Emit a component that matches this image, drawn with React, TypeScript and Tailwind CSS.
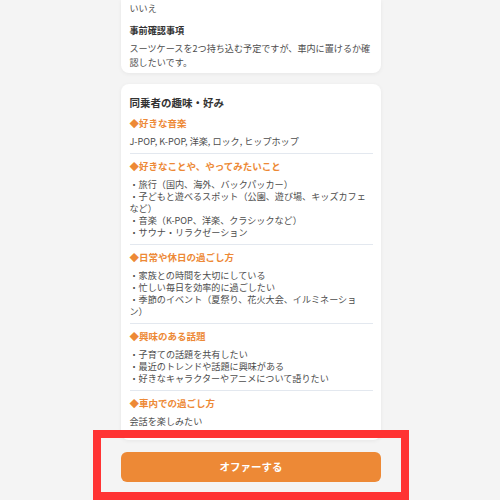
const sections = [
  { title: "◆好きな音楽", items: ["J-POP, K-POP, 洋楽, ロック, ヒップホップ"] },
  {
    title: "◆好きなことや、やってみたいこと",
    items: [
      "・旅行（国内、海外、バックパッカー）",
      "・子どもと遊べるスポット（公園、遊び場、キッズカフェなど）",
      "・音楽（K-POP、洋楽、クラシックなど）",
      "・サウナ・リラクゼーション",
    ],
  },
  {
    title: "◆日常や休日の過ごし方",
    items: [
      "・家族との時間を大切にしている",
      "・忙しい毎日を効率的に過ごしたい",
      "・季節のイベント（夏祭り、花火大会、イルミネーション）",
    ],
  },
  {
    title: "◆興味のある話題",
    items: [
      "・子育ての話題を共有したい",
      "・最近のトレンドや話題に興味がある",
      "・好きなキャラクターやアニメについて語りたい",
    ],
  },
  { title: "◆車内での過ごし方", items: ["会話を楽しみたい"] },
];

export default function App() {
  return (
    <div className='relative h-[500px] w-full overflow-hidden bg-[#f4f4f4] font-["Noto_Sans_CJK_JP","Noto_Sans",sans-serif] [text-spacing-trim:space-all]'>
      <div className="ml-[121px] flex w-[260px] flex-col">
        {/* 上のカード（スクロールで上部が切れている） */}
        <div className="rounded-b-lg bg-white px-[8.5px] pb-[4px] pt-[1px] text-[9.1px] text-[#4d4d4d] shadow-[0_1px_4px_rgba(0,0,0,0.06)]">
          <div className="leading-[14px]">いいえ</div>
          <div className="mt-[8px] font-bold leading-[14px] text-[#333]">事前確認事項</div>
          <p className="mt-[4px] leading-[14px]">
            スーツケースを2つ持ち込む予定ですが、車内に置けるか確認したいです。
          </p>
        </div>

        <div className="mt-[11px] rounded-lg bg-white px-[8.5px] pb-[13px] pt-[12px] shadow-[0_1px_4px_rgba(0,0,0,0.06)]">
          <div className="text-[10.5px] font-bold leading-[14px] text-[#333]">同乗者の趣味・好み</div>
          <div className="mt-[6px] flex flex-col">
            {sections.map((s, i) => (
              <div
                key={s.title}
                className={
                  i === 0
                    ? "pb-[6px]"
                    : i === sections.length - 1
                      ? "border-t border-[#e3e8ef] pt-[5px]"
                      : "border-t border-[#e3e8ef] pb-[6px] pt-[5px]"
                }
              >
                <div className="text-[9.5px] font-bold leading-[14px] text-[#ed8936]">{s.title}</div>
                <div className="mt-[5px] text-[9.1px] leading-[12px] text-[#4d4d4d]">
                  {s.items.map((t) => (
                    <div key={t}>{t}</div>
                  ))}
                </div>
              </div>
            ))}
          </div>
        </div>

        <button className="mt-[12px] flex h-[30px] w-full items-center justify-center rounded-md bg-[#ed8936] text-[10.5px] font-bold text-white">
          オファーする
        </button>
      </div>

      <div className="absolute left-[93px] top-[430px] h-[70px] w-[316px] border-[8px] border-[#ff3333]" />
    </div>
  );
}
